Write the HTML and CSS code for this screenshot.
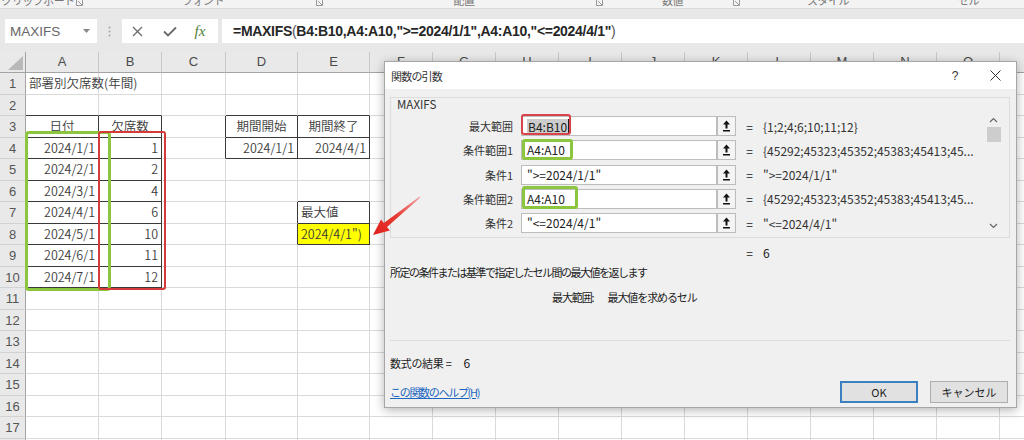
FILE: index.html
```html
<!DOCTYPE html>
<html lang="ja">
<head>
<meta charset="utf-8">
<title>MAXIFS 関数の引数</title>
<link rel="stylesheet" href="styles.css">
</head>
<body>
<div class="page">
  <div class="ribbon">
    <span class="rl w76">クリップボード</span>
    <span class="ln w14"><svg width="7" height="7" viewBox="0 0 7 7"><path d="M0.5 0.5h6v6h-6z M2 2l4 4" fill="none" stroke="#9a9a9a" stroke-width="1"/></svg></span>
    <span class="rl w226">フォント</span>
    <span class="ln w16"><svg width="7" height="7" viewBox="0 0 7 7"><path d="M0.5 0.5h6v6h-6z M2 2l4 4" fill="none" stroke="#9a9a9a" stroke-width="1"/></svg></span>
    <span class="rl w264">配置</span>
    <span class="ln w16"><svg width="7" height="7" viewBox="0 0 7 7"><path d="M0.5 0.5h6v6h-6z M2 2l4 4" fill="none" stroke="#9a9a9a" stroke-width="1"/></svg></span>
    <span class="rl w121">数値</span>
    <span class="ln w16"><svg width="7" height="7" viewBox="0 0 7 7"><path d="M0.5 0.5h6v6h-6z M2 2l4 4" fill="none" stroke="#9a9a9a" stroke-width="1"/></svg></span>
    <span class="rl w158">スタイル</span>
    <span class="vdiv"></span>
    <span class="rl w111">セル</span>
  </div>

  <div class="fbar">
    <div class="namebox"><span>MAXIFS</span><svg width="7" height="4" viewBox="0 0 7 4"><path d="M0 0h7L3.5 4z" fill="#888"/></svg></div>
    <div class="grip"><svg width="3" height="11" viewBox="0 0 3 11"><circle cx="1.5" cy="1.5" r="1" fill="#a6a6a6"/><circle cx="1.5" cy="5.5" r="1" fill="#a6a6a6"/><circle cx="1.5" cy="9.5" r="1" fill="#a6a6a6"/></svg></div>
    <div class="fbtns">
      <span class="fb"><svg width="11" height="11" viewBox="0 0 11 11"><path d="M1 1l9 9M10 1l-9 9" stroke="#6a6a6a" stroke-width="1.3" fill="none"/></svg></span>
      <span class="fb"><svg width="14" height="11" viewBox="0 0 14 11"><path d="M1 5.5l4 4L13 1.5" stroke="#6a6a6a" stroke-width="1.8" fill="none"/></svg></span>
      <span class="fb fx">fx</span>
    </div>
    <div class="finput">=MAXIFS<span class="pr">(</span>B4:B10,A4:A10,"&gt;=2024/1/1",A4:A10,"&lt;=2024/4/1"<span class="pr">)</span></div>
  </div>

  <div class="sheet">
    <div class="corner"><svg width="15" height="14" viewBox="0 0 15 14"><path d="M15 0V14H0z" fill="#b8b8b8"/></svg></div><div class="ch">A</div><div class="ch">B</div><div class="ch">C</div><div class="ch">D</div><div class="ch">E</div><div class="ch">F</div><div class="ch">G</div><div class="ch">H</div><div class="ch">I</div><div class="ch">J</div><div class="ch">K</div><div class="ch">L</div><div class="ch">M</div><div class="ch">N</div><div class="ch">O</div><div class="ch">P</div>
    <div class="rh">1</div><div>部署別欠席数(年間)</div><div></div><div></div><div></div><div></div><div></div><div></div><div></div><div></div><div></div><div></div><div></div><div></div><div></div><div></div><div></div>
    <div class="rh">2</div><div class="b"></div><div class="b"></div><div></div><div class="b"></div><div class="b"></div><div></div><div></div><div></div><div></div><div></div><div></div><div></div><div></div><div></div><div></div><div></div>
    <div class="rh">3</div><div class="r b m">日付</div><div class="r b m">欠席数</div><div class="r"></div><div class="r b m">期間開始</div><div class="r b m">期間終了</div><div></div><div></div><div></div><div></div><div></div><div></div><div></div><div></div><div></div><div></div><div></div>
    <div class="rh">4</div><div class="r b n">2024/1/1</div><div class="r b n">1</div><div class="r"></div><div class="r b n">2024/1/1</div><div class="r b n">2024/4/1</div><div></div><div></div><div></div><div></div><div></div><div></div><div></div><div></div><div></div><div></div><div></div>
    <div class="rh">5</div><div class="r b n">2024/2/1</div><div class="r b n">2</div><div></div><div></div><div></div><div></div><div></div><div></div><div></div><div></div><div></div><div></div><div></div><div></div><div></div><div></div>
    <div class="rh">6</div><div class="r b n">2024/3/1</div><div class="r b n">4</div><div></div><div></div><div class="b"></div><div></div><div></div><div></div><div></div><div></div><div></div><div></div><div></div><div></div><div></div><div></div>
    <div class="rh">7</div><div class="r b n">2024/4/1</div><div class="r b n">6</div><div></div><div class="r"></div><div class="r b">最大値</div><div></div><div></div><div></div><div></div><div></div><div></div><div></div><div></div><div></div><div></div><div></div>
    <div class="rh">8</div><div class="r b n">2024/5/1</div><div class="r b n">10</div><div></div><div class="r"></div><div class="r b y">2024/4/1")</div><div></div><div></div><div></div><div></div><div></div><div></div><div></div><div></div><div></div><div></div><div></div>
    <div class="rh">9</div><div class="r b n">2024/6/1</div><div class="r b n">11</div><div></div><div></div><div></div><div></div><div></div><div></div><div></div><div></div><div></div><div></div><div></div><div></div><div></div><div></div>
    <div class="rh">10</div><div class="r b n">2024/7/1</div><div class="r b n">12</div><div></div><div></div><div></div><div></div><div></div><div></div><div></div><div></div><div></div><div></div><div></div><div></div><div></div><div></div>
    <div class="rh">11</div><div></div><div></div><div></div><div></div><div></div><div></div><div></div><div></div><div></div><div></div><div></div><div></div><div></div><div></div><div></div><div></div>
    <div class="rh">12</div><div></div><div></div><div></div><div></div><div></div><div></div><div></div><div></div><div></div><div></div><div></div><div></div><div></div><div></div><div></div><div></div>
    <div class="rh">13</div><div></div><div></div><div></div><div></div><div></div><div></div><div></div><div></div><div></div><div></div><div></div><div></div><div></div><div></div><div></div><div></div>
    <div class="rh">14</div><div></div><div></div><div></div><div></div><div></div><div></div><div></div><div></div><div></div><div></div><div></div><div></div><div></div><div></div><div></div><div></div>
    <div class="rh">15</div><div></div><div></div><div></div><div></div><div></div><div></div><div></div><div></div><div></div><div></div><div></div><div></div><div></div><div></div><div></div><div></div>
    <div class="rh">16</div><div></div><div></div><div></div><div></div><div></div><div></div><div></div><div></div><div></div><div></div><div></div><div></div><div></div><div></div><div></div><div></div>
    <div class="rh">17</div><div></div><div></div><div></div><div></div><div></div><div></div><div></div><div></div><div></div><div></div><div></div><div></div><div></div><div></div><div></div><div></div>
    <div class="rh">18</div><div></div><div></div><div></div><div></div><div></div><div></div><div></div><div></div><div></div><div></div><div></div><div></div><div></div><div></div><div></div><div></div>
  </div>

  <div class="mark mark-green"></div>
  <div class="mark mark-red"></div>

  <div class="dialog">
    <div class="dtitle">
      <span class="dname">関数の引数</span>
      <span class="tbtn">?</span>
      <span class="tbtn"><svg width="11" height="11" viewBox="0 0 11 11"><path d="M0.5 0.5l10 10M10.5 0.5l-10 10" stroke="#333" stroke-width="1" fill="none"/></svg></span>
    </div>
    <div class="dbody">
      <div class="group">
        <div class="gtitle">MAXIFS</div>
        <div class="gmain">
          <div class="fields">
            <label>最大範囲</label>
            <div class="inp"><span class="sel">B4:B10</span><span class="caret"></span></div>
            <div class="ref"><svg width="9" height="12" viewBox="0 0 9 12"><path d="M4.5 0.5L1 4.5h2.5v4h2v-4H8z M1 10h7v1.5H1z" fill="#111"/></svg></div>
            <span class="eq">=</span>
            <span class="val">{1;2;4;6;10;11;12}</span>

            <label>条件範囲1</label>
            <div class="inp">A4:A10</div>
            <div class="ref"><svg width="9" height="12" viewBox="0 0 9 12"><path d="M4.5 0.5L1 4.5h2.5v4h2v-4H8z M1 10h7v1.5H1z" fill="#111"/></svg></div>
            <span class="eq">=</span>
            <span class="val">{45292;45323;45352;45383;45413;45...</span>

            <label>条件1</label>
            <div class="inp">"&gt;=2024/1/1"</div>
            <div class="ref"><svg width="9" height="12" viewBox="0 0 9 12"><path d="M4.5 0.5L1 4.5h2.5v4h2v-4H8z M1 10h7v1.5H1z" fill="#111"/></svg></div>
            <span class="eq">=</span>
            <span class="val">"&gt;=2024/1/1"</span>

            <label>条件範囲2</label>
            <div class="inp">A4:A10</div>
            <div class="ref"><svg width="9" height="12" viewBox="0 0 9 12"><path d="M4.5 0.5L1 4.5h2.5v4h2v-4H8z M1 10h7v1.5H1z" fill="#111"/></svg></div>
            <span class="eq">=</span>
            <span class="val">{45292;45323;45352;45383;45413;45...</span>

            <label>条件2</label>
            <div class="inp">"&lt;=2024/4/1"</div>
            <div class="ref"><svg width="9" height="12" viewBox="0 0 9 12"><path d="M4.5 0.5L1 4.5h2.5v4h2v-4H8z M1 10h7v1.5H1z" fill="#111"/></svg></div>
            <span class="eq">=</span>
            <span class="val">"&lt;=2024/4/1"</span>
          </div>
          <div class="scroll">
            <svg width="9" height="6" viewBox="0 0 9 6"><path d="M1 5l3.5-3.5L8 5" stroke="#666" stroke-width="1.2" fill="none"/></svg>
            <div class="thumb"></div>
            <div class="sfill"></div>
            <svg width="9" height="6" viewBox="0 0 9 6"><path d="M1 1l3.5 3.5L8 1" stroke="#666" stroke-width="1.2" fill="none"/></svg>
          </div>
        </div>
      </div>
      <div class="eqline"><span class="eq">=</span><span>6</span></div>
      <p class="desc">所定の条件または基準で指定したセル間の最大値を返します</p>
      <p class="argdesc"><span>最大範囲:</span><span class="argtext">最大値を求めるセル</span></p>
      <div class="sep"></div>
      <p class="result">数式の結果 =<span class="resval">6</span></p>
      <div class="footer">
        <a class="helplink">この関数のヘルプ(H)</a>
        <button class="btn btn-ok">OK</button>
        <button class="btn">キャンセル</button>
      </div>
    </div>
    <div class="hl hl-red"></div>
    <div class="hl hl-green1"></div>
    <div class="hl hl-green2"></div>
  </div>

  <svg class="arrow" width="70" height="60" viewBox="0 0 70 60">
    <defs>
      <linearGradient id="ag" x1="60" y1="12" x2="13" y2="50" gradientUnits="userSpaceOnUse">
        <stop offset="0" stop-color="#f3a0a0"/>
        <stop offset="0.5" stop-color="#e63a32"/>
        <stop offset="1" stop-color="#e0201a"/>
      </linearGradient>
    </defs>
    <path d="M60.3 12.4 L27.0 41.9 L29.9 45.4 L13 50 L21.0 34.5 L23.9 38.0 L59.7 11.6 Z" fill="url(#ag)"/>
  </svg>
</div>
</body>
</html>
```

FILE: styles.css
```css
* { box-sizing: border-box; }
html, body { margin: 0; padding: 0; }
body {
  width: 1024px;
  height: 440px;
  overflow: hidden;
  background: #fff;
  font-family: "Noto Sans CJK JP", "Noto Sans", sans-serif;
}
.page {
  position: relative;
  width: 1024px;
  height: 440px;
  overflow: hidden;
}

/* ribbon group labels (cut off at the top edge, as in the capture) */
.ribbon {
  display: flex;
  height: 9px;
  background: #f3f3f3;
  border-bottom: 1px solid #dadada;
  overflow: hidden;
  color: #777;
  font-size: 11px;
  line-height: 12px;
  letter-spacing: -0.5px;
}
.ribbon > span { flex: none; display: block; white-space: nowrap; text-align: center; }
.rl { margin-top: -6px; }
.ln { display: flex; justify-content: center; }
.ln svg { display: block; margin-top: -1px; }
.w14 { width: 14px; }
.w16 { width: 16px; }
.w76 { width: 76px; }
.w226 { width: 226px; }
.w264 { width: 264px; }
.w121 { width: 121px; }
.w158 { width: 158px; }
.w111 { width: 111px; }
.vdiv { width: 6px; display: flex; justify-content: center; }
.vdiv::before { content: ""; width: 1px; height: 9px; background: #c4c4c4; }

/* formula bar */
.fbar {
  display: flex;
  align-items: flex-start;
  height: 43px;
  padding-top: 10px;
  background: #e8e8e8;
}
.namebox {
  margin-left: 5px;
  width: 92px;
  height: 24px;
  background: #fff;
  display: flex;
  align-items: center;
  justify-content: space-between;
  padding: 0 7px 0 5px;
  font: 13.5px "Liberation Sans", sans-serif;
  color: #666;
}
.grip {
  width: 25px;
  height: 24px;
  display: flex;
  align-items: center;
  justify-content: center;
}
.fbtns {
  width: 96px;
  height: 24px;
  background: #fff;
  display: flex;
  align-items: center;
  gap: 3px;
}
.fb { width: 30px; display: flex; justify-content: center; align-items: center; }
.fx {
  width: 24px;
  font: italic 15px "Liberation Serif", serif;
  color: #4f7f3c;
}
.finput {
  margin-left: 4px;
  flex: 1;
  height: 24px;
  background: #fff;
  padding-left: 11px;
  font: bold 14px/24px "Liberation Sans", sans-serif;
  letter-spacing: -0.3px;
  color: #262626;
  white-space: nowrap;
}
.pr { font-weight: normal; color: #555; }

/* sheet */
.sheet {
  display: grid;
  grid-template-columns: 26px 73px 63px 64px 72px 72px repeat(11, 63px);
  grid-template-rows: 21px;
  grid-auto-rows: 21.5px;
  width: 1063px;
  font-size: 12.5px;
  font-weight: 350;
  color: #3c3c3c;
}
.sheet > div {
  border-right: 1px solid #dadada;
  border-bottom: 1px solid #dadada;
  line-height: 20px;
  padding: 0 3px;
  white-space: nowrap;
}
.sheet > .ch {
  background: #e9e9e9;
  border-right-color: #c8c8c8;
  border-bottom-color: #a3a3a3;
  text-align: center;
  color: #4a4a4a;
  font: 13px/20px "Liberation Sans", sans-serif;
}
.sheet > .corner {
  background: #e9e9e9;
  border-right-color: #a3a3a3;
  border-bottom-color: #a3a3a3;
  display: flex;
  align-items: flex-end;
  justify-content: flex-end;
  padding: 0 2px 2px 0;
}
.corner svg { display: block; }
.sheet > .rh {
  background: #e9e9e9;
  border-right-color: #a3a3a3;
  border-bottom-color: #d2d2d2;
  text-align: center;
  color: #555;
  padding: 0;
  font: 13px/21px "Liberation Sans", sans-serif;
}
.sheet > .r { border-right-color: #3a3a3a; }
.sheet > .b { border-bottom-color: #3a3a3a; }
.sheet > .n { text-align: right; }
.sheet > .m { text-align: center; }
.sheet > .y { background: #ffff00; }

/* annotation boxes on the sheet */
.mark { position: absolute; }
.mark-green {
  left: 25px; top: 131px; width: 86px; height: 160px;
  border: 3px solid #8cc63f;
  border-radius: 4px;
}
.mark-red {
  left: 98px; top: 131px; width: 68px; height: 159px;
  border: 2px solid #d63a3a;
  border-radius: 3px;
}

/* dialog */
.dialog {
  position: absolute;
  left: 384px;
  top: 61px;
  width: 633px;
  height: 347px;
  background: #f0f0f0;
  border: 1px solid #a6a6a6;
  box-shadow: 0 2px 10px rgba(0, 0, 0, 0.3);
  font-size: 11px;
  color: #222;
}
.dtitle {
  display: flex;
  align-items: center;
  height: 27px;
  background: #fff;
  padding: 0 1px 0 6px;
}
.dname { flex: 1; letter-spacing: -0.8px; color: #333; }
.tbtn {
  width: 40px;
  display: flex;
  justify-content: center;
  align-items: center;
  font: 12px "Liberation Sans", sans-serif;
  color: #333;
}
.dbody { padding: 0 6px 0 5px; }
.group {
  margin-top: 8px;
  height: 141px;
  border: 1px solid #dcdcdc;
  padding-right: 8px;
}
.gtitle {
  margin-left: 6px;
  line-height: 12px;
  font-size: 11.5px;
  color: #333;
}
.gmain {
  display: flex;
  margin-top: 6px;
}
.fields {
  display: grid;
  grid-template-columns: 130px 196px 19px 27px 1fr;
  grid-auto-rows: 20px;
  row-gap: 4.3px;
  width: 595px;
  align-items: center;
}
.fields label {
  text-align: right;
  padding-right: 8px;
  line-height: 20px;
  color: #333;
}
.inp {
  height: 20px;
  background: #fff;
  border: 1px solid #bdbdbd;
  padding-left: 5px;
  line-height: 18px;
  white-space: nowrap;
  display: flex;
  align-items: center;
  font-size: 12px;
}
.sel { background: #cccccc; padding: 0 1px; line-height: 15px; }
.caret { width: 1px; height: 14px; background: #222; }
.ref {
  height: 20px;
  border: 1px solid #bcbcbc;
  background: #f4f4f4;
  display: flex;
  align-items: center;
  justify-content: center;
}
.ref svg { display: block; }
.eq { text-align: center; font-size: 12px; }
.val { white-space: nowrap; overflow: hidden; color: #333; font-size: 12px; }
.scroll {
  width: 15px;
  height: 117px;
  display: flex;
  flex-direction: column;
  align-items: center;
  padding: 1px 0 4px;
}
.scroll svg { display: block; flex: none; }
.thumb { width: 14px; height: 15px; background: #cdcdcd; margin-top: 4px; flex: none; }
.sfill { flex: 1; }
.eqline {
  display: flex;
  margin-top: 7px;
  height: 16px;
  line-height: 16px;
  padding-left: 346px;
  font-size: 12px;
}
.eqline .eq { width: 27px; }
.desc {
  margin: 4px 0 0;
  line-height: 14px;
  letter-spacing: -1.5px;
}
.argdesc {
  margin: 11px 0 0;
  line-height: 14px;
  padding-left: 162px;
  letter-spacing: -1.1px;
}
.argtext { margin-left: 14px; }
.sep {
  margin-top: 36px;
  height: 1px;
  background: #dcdcdc;
}
.result {
  margin: 15px 0 0;
  line-height: 14px;
  letter-spacing: -0.3px;
}
.resval { margin-left: 12px; font-size: 12px; }
.footer {
  display: flex;
  align-items: center;
  margin-top: 11px;
  height: 22px;
}
.helplink {
  flex: 1;
  color: #1a66c0;
  text-decoration: underline;
  letter-spacing: -1.3px;
}
.btn {
  width: 78px;
  height: 22px;
  margin: 0;
  padding: 0;
  background: #e1e1e1;
  border: 1px solid #adadad;
  font: 11px "Noto Sans CJK JP", sans-serif;
  color: #222;
}
.btn-ok {
  border: 2px solid #3d80c0;
  margin-right: 12px;
}
.btn + .btn { margin-right: 2px; }

/* highlight boxes in dialog */
.hl { position: absolute; border-radius: 3px; }
.hl-red {
  left: 136px; top: 52px; width: 50px; height: 21px;
  border: 2px solid #d9434b;
}
.hl-green1 {
  left: 137px; top: 77px; width: 51px; height: 21px;
  border: 3px solid #8cc63f;
}
.hl-green2 {
  left: 137px; top: 124px; width: 56px; height: 23px;
  border: 3px solid #8cc63f;
}

.arrow {
  position: absolute;
  left: 360px;
  top: 185px;
}
```
